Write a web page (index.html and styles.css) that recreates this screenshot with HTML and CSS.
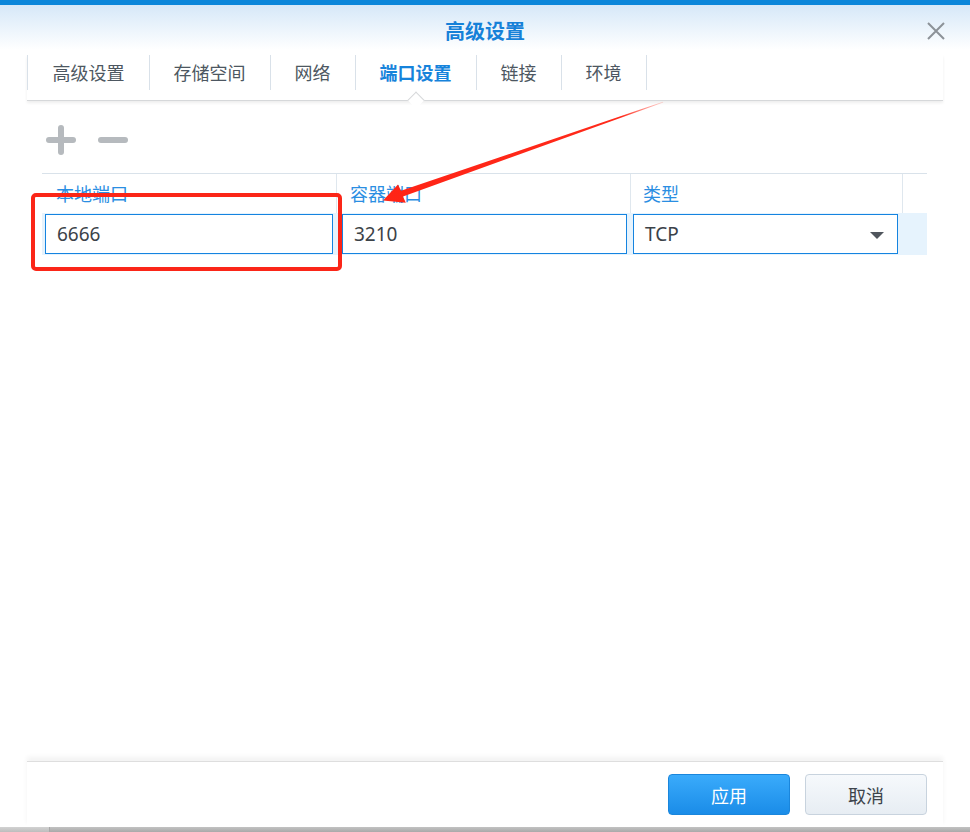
FILE: index.html
```html
<!DOCTYPE html>
<html lang="zh">
<head>
<meta charset="utf-8">
<title>高级设置</title>
<link rel="stylesheet" href="styles.css">
</head>
<body>
<div class="dialog">
  <div class="topbar"></div>
  <div class="titlebar">
    <div class="title">高级设置</div>
    <svg class="close" width="20" height="18" viewBox="0 0 20 18"><path d="M2 1 L18 17 M18 1 L2 17" stroke="#8c9298" stroke-width="2" fill="none"/></svg>
  </div>
  <div class="tabs">
    <div class="tab">高级设置</div>
    <div class="tab">存储空间</div>
    <div class="tab">网络</div>
    <div class="tab active">端口设置<span class="notch"></span></div>
    <div class="tab">链接</div>
    <div class="tab">环境</div>
  </div>
  <div class="toolbar">
    <span class="plus"></span>
    <span class="minus"></span>
  </div>
  <div class="grid">
    <div class="ghead">
      <div class="hcell c1">本地端口</div>
      <div class="hcell c2">容器端口</div>
      <div class="hcell c3">类型</div>
      <div class="hcell c4"></div>
    </div>
    <div class="grow">
      <div class="cell c1"><div class="field">6666</div></div>
      <div class="cell c2"><div class="field">3210</div></div>
      <div class="cell c3"><div class="field select">TCP<span class="caret"></span></div></div>
      <div class="cell c4"></div>
    </div>
  </div>
  <div class="spacer"></div>
  <div class="footer">
    <button class="btn primary">应用</button>
    <button class="btn">取消</button>
  </div>
</div>
<div class="bottom"><div class="bl"></div><div class="br"></div></div>
<div class="redbox"></div>
<svg class="arrow" width="970" height="832" viewBox="0 0 970 832">
  <defs>
    <linearGradient id="ag" x1="663" y1="102" x2="383" y2="200" gradientUnits="userSpaceOnUse">
      <stop offset="0" stop-color="#ff3a2a" stop-opacity="0.2"/>
      <stop offset="0.15" stop-color="#ff2a1a"/>
      <stop offset="1" stop-color="#ff2416"/>
    </linearGradient>
  </defs>
  <polygon points="663,101.8 663.2,102.4 403,196.5 405.8,202.8 383,200.5 398,184.5 401,190.8" fill="url(#ag)"/>
</svg>
</body>
</html>
```
FILE: styles.css
```css
html, body {
  margin: 0;
  padding: 0;
  background: #ffffff;
}
body {
  width: 970px;
  height: 832px;
  overflow: hidden;
  position: relative;
  font-family: "Noto Sans", "Noto Sans CJK SC", sans-serif;
}
.dialog {
  height: 827px;
  display: flex;
  flex-direction: column;
  background: #ffffff;
}
.topbar {
  height: 5px;
  background: #0b86da;
}
.titlebar {
  height: 45px;
  background: linear-gradient(#d6e8f8, #ffffff);
  display: flex;
  align-items: center;
  justify-content: center;
  position: relative;
}
.title {
  font-size: 20px;
  font-weight: bold;
  color: #1681d8;
  margin-top: 6px;
}
.close {
  position: absolute;
  right: 24px;
  top: 17px;
}
.tabs {
  margin: 5px 27px 0 27px;
  display: flex;
  border-bottom: 1px solid #d6d8da;
  box-shadow: 0 2px 3px rgba(0, 0, 0, 0.07);
  height: 46px;
  box-sizing: border-box;
}
.tab {
  position: relative;
  height: 35px;
  line-height: 36px;
  padding: 0 24.5px;
  font-size: 18px;
  color: #4d5761;
  border-right: 1px solid #d9e1e9;
  margin-right: -1px;
}
.tab:first-child {
  border-left: 1px solid #d9e1e9;
}
.tab.active {
  color: #1683db;
  font-weight: bold;
}
.notch {
  position: absolute;
  left: 50%;
  bottom: -16px;
  width: 11px;
  height: 11px;
  margin-left: -6px;
  background: #ffffff;
  border-left: 1px solid #d6d8da;
  border-top: 1px solid #d6d8da;
  transform: rotate(45deg);
}
.toolbar {
  height: 72px;
  box-sizing: border-box;
  display: flex;
  align-items: center;
  padding: 6px 0 0 46px;
  gap: 22px;
}
.plus, .minus {
  position: relative;
  width: 30px;
  height: 30px;
  display: block;
}
.plus::before, .plus::after, .minus::before {
  content: "";
  position: absolute;
  background: #b6babe;
  border-radius: 3px;
}
.plus::before, .minus::before {
  left: 0;
  right: 0;
  top: 12px;
  height: 6px;
}
.plus::after {
  top: 0;
  bottom: 0;
  left: 12px;
  width: 6px;
}
.grid {
  margin-left: 42px;
  width: 885px;
}
.ghead {
  display: flex;
  height: 40px;
  border-top: 1px solid #d9e2ea;
  box-sizing: border-box;
}
.hcell {
  font-size: 18px;
  color: #2a8ee2;
  line-height: 40px;
  box-sizing: border-box;
  border-right: 1px solid #dfe7ee;
}
.ghead .c1 { width: 295px; padding-left: 14px; }
.ghead .c2 { width: 294px; padding-left: 13px; }
.ghead .c3 { width: 272px; padding-left: 12px; }
.ghead .c4 { width: 24px; border-right: none; }
.grow {
  display: flex;
  height: 42px;
  background: #e6f3fd;
  box-sizing: border-box;
  padding: 1px 0;
}
.cell {
  box-sizing: border-box;
  display: flex;
}
.grow .c1 { width: 295px; padding: 0 4px 0 3px; }
.grow .c2 { width: 294px; padding: 0 4px 0 5px; }
.grow .c3 { width: 272px; padding: 0 5px 0 2px; }
.grow .c4 { width: 24px; }
.field {
  flex: 1;
  height: 40px;
  box-sizing: border-box;
  border: 1px solid #1584e0;
  background: #ffffff;
  font-size: 19px;
  color: #3b4248;
  line-height: 39px;
  padding-left: 11px;
  position: relative;
}
.caret {
  position: absolute;
  right: 13px;
  top: 17px;
  width: 0;
  height: 0;
  border-left: 7px solid transparent;
  border-right: 7px solid transparent;
  border-top: 7px solid #50565d;
}
.spacer {
  flex: 1;
}
.footer {
  margin: 0 27px;
  height: 66px;
  border-top: 1px solid #dedede;
  box-shadow: 0 -4px 5px rgba(0, 0, 0, 0.05);
  display: flex;
  justify-content: flex-end;
  align-items: flex-start;
  padding: 12px 16px 0 0;
  box-sizing: border-box;
  gap: 15px;
  background: #ffffff;
  position: relative;
}
.btn {
  width: 122px;
  height: 41px;
  border-radius: 4px;
  font-family: "Noto Sans", "Noto Sans CJK SC", sans-serif;
  font-size: 18px;
  color: #3d444b;
  background: linear-gradient(#f6f9fc, #e7edf3);
  border: 1px solid #c8d3de;
  padding: 0;
}
.btn.primary {
  color: #ffffff;
  background: linear-gradient(#3aabfb, #1a8ce8);
  border: 1px solid #1a86dc;
}
.bottom {
  height: 5px;
  display: flex;
}
.bl {
  width: 49px;
  background: linear-gradient(#d2d2d2, #bdbdbd);
  border-right: 1px solid #a8a8a8;
}
.br {
  flex: 1;
  background: linear-gradient(#c2c2c2, #a9a9a9);
}
.redbox {
  position: absolute;
  left: 31px;
  top: 193px;
  width: 311px;
  height: 78px;
  box-sizing: border-box;
  border: 4px solid #fb2618;
  border-radius: 5px;
}
.arrow {
  position: absolute;
  left: 0;
  top: 0;
  pointer-events: none;
}
```
